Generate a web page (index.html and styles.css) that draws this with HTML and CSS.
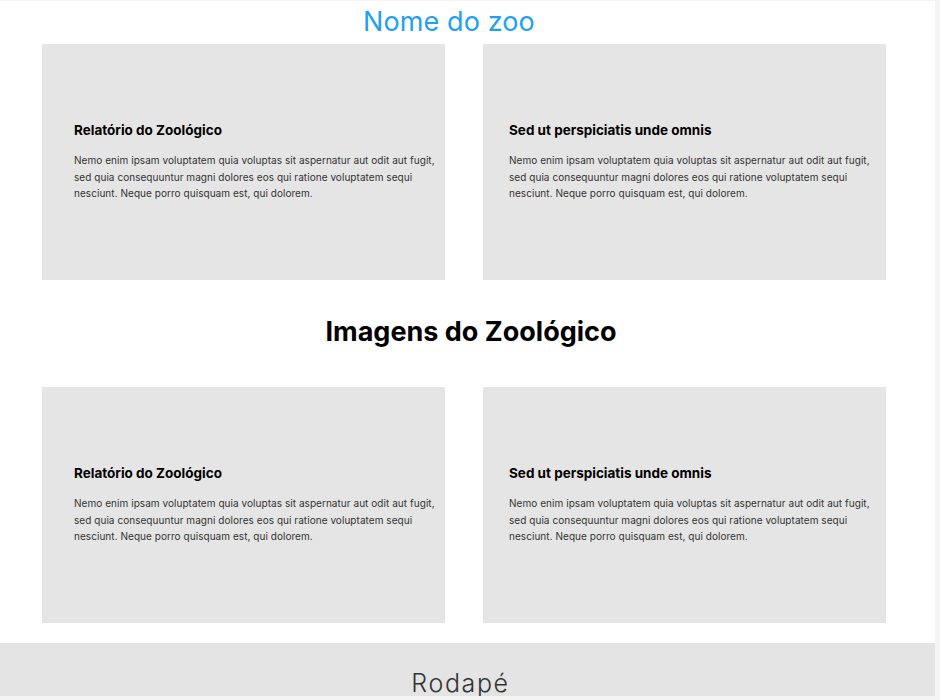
FILE: index.html
```html
<!DOCTYPE html>
<html lang="pt">
<head>
<meta charset="utf-8">
<title>Nome do zoo</title>
<link rel="stylesheet" href="styles.css">
</head>
<body>
<div class="page">
  <header class="site-header">
    <h1 class="site-title">Nome do zoo</h1>
  </header>
  <main class="content">
    <section class="card-row">
      <article class="card">
        <h3 class="card-title">Relatório do Zoológico</h3>
        <p class="card-text">Nemo enim ipsam voluptatem quia voluptas sit aspernatur aut odit aut fugit, sed quia consequuntur magni dolores eos qui ratione voluptatem sequi nesciunt. Neque porro quisquam est, qui dolorem.</p>
      </article>
      <article class="card card-alt">
        <h3 class="card-title">Sed ut perspiciatis unde omnis</h3>
        <p class="card-text">Nemo enim ipsam voluptatem quia voluptas sit aspernatur aut odit aut fugit, sed quia consequuntur magni dolores eos qui ratione voluptatem sequi nesciunt. Neque porro quisquam est, qui dolorem.</p>
      </article>
    </section>
    <h2 class="section-title">Imagens do Zoológico</h2>
    <section class="card-row">
      <article class="card">
        <h3 class="card-title">Relatório do Zoológico</h3>
        <p class="card-text">Nemo enim ipsam voluptatem quia voluptas sit aspernatur aut odit aut fugit, sed quia consequuntur magni dolores eos qui ratione voluptatem sequi nesciunt. Neque porro quisquam est, qui dolorem.</p>
      </article>
      <article class="card card-alt">
        <h3 class="card-title">Sed ut perspiciatis unde omnis</h3>
        <p class="card-text">Nemo enim ipsam voluptatem quia voluptas sit aspernatur aut odit aut fugit, sed quia consequuntur magni dolores eos qui ratione voluptatem sequi nesciunt. Neque porro quisquam est, qui dolorem.</p>
      </article>
    </section>
  </main>
  <footer class="site-footer">
    <p class="footer-text">Rodapé</p>
  </footer>
</div>
</body>
</html>
```

FILE: styles.css
```css
html, body {
  margin: 0;
  padding: 0;
}
body {
  background: #f4f4f4;
  overflow: hidden;
}
.page {
  width: 935px;
  height: 695px;
  margin-top: 1px;
  background: #fff;
  overflow: hidden;
  display: flex;
  flex-direction: column;
}
.page > * {
  flex-shrink: 0;
}
.site-header {
  height: 43px;
  box-sizing: border-box;
  padding: 0 37px 2px 0;
  display: flex;
  justify-content: center;
  align-items: center;
}
.site-title {
  margin: 0;
  font-family: Inter, sans-serif;
  font-weight: 400;
  font-size: 27px;
  letter-spacing: 0.1px;
  color: #1ea1f1;
  line-height: 1;
}
.content {
  padding: 0 49px 0 42px;
}
.card-row {
  display: grid;
  grid-template-columns: 403px 403px;
  column-gap: 38px;
}
.card {
  height: 236px;
  background: #e5e5e5;
  box-sizing: border-box;
  padding: 0 2px 0 32px;
  display: flex;
  flex-direction: column;
  justify-content: center;
  font-family: Inter, sans-serif;
}
.card-alt {
  padding: 0 8px 0 26px;
}
.card-title {
  margin: 0 0 14px;
  font-size: 13.5px;
  font-weight: 700;
  color: #000;
}
.card-text {
  margin: 0;
  font-size: 10px;
  letter-spacing: 0.05px;
  line-height: 16.5px;
  color: #333;
}
.section-title {
  margin: 0;
  height: 107px;
  box-sizing: border-box;
  padding: 0 0 4px 14px;
  display: flex;
  align-items: center;
  justify-content: center;
  font-family: Inter, sans-serif;
  font-weight: 700;
  font-size: 27px;
  color: #000;
}
.site-footer {
  margin-top: 20px;
  height: 60px;
  box-sizing: border-box;
  padding-right: 14px;
  background: #e4e4e4;
  display: flex;
  justify-content: center;
}
.footer-text {
  margin: 28px 0 0;
  font-family: Inter, sans-serif;
  font-weight: 300;
  font-size: 25px;
  letter-spacing: 1.6px;
  color: #333;
  line-height: 1;
}
```
